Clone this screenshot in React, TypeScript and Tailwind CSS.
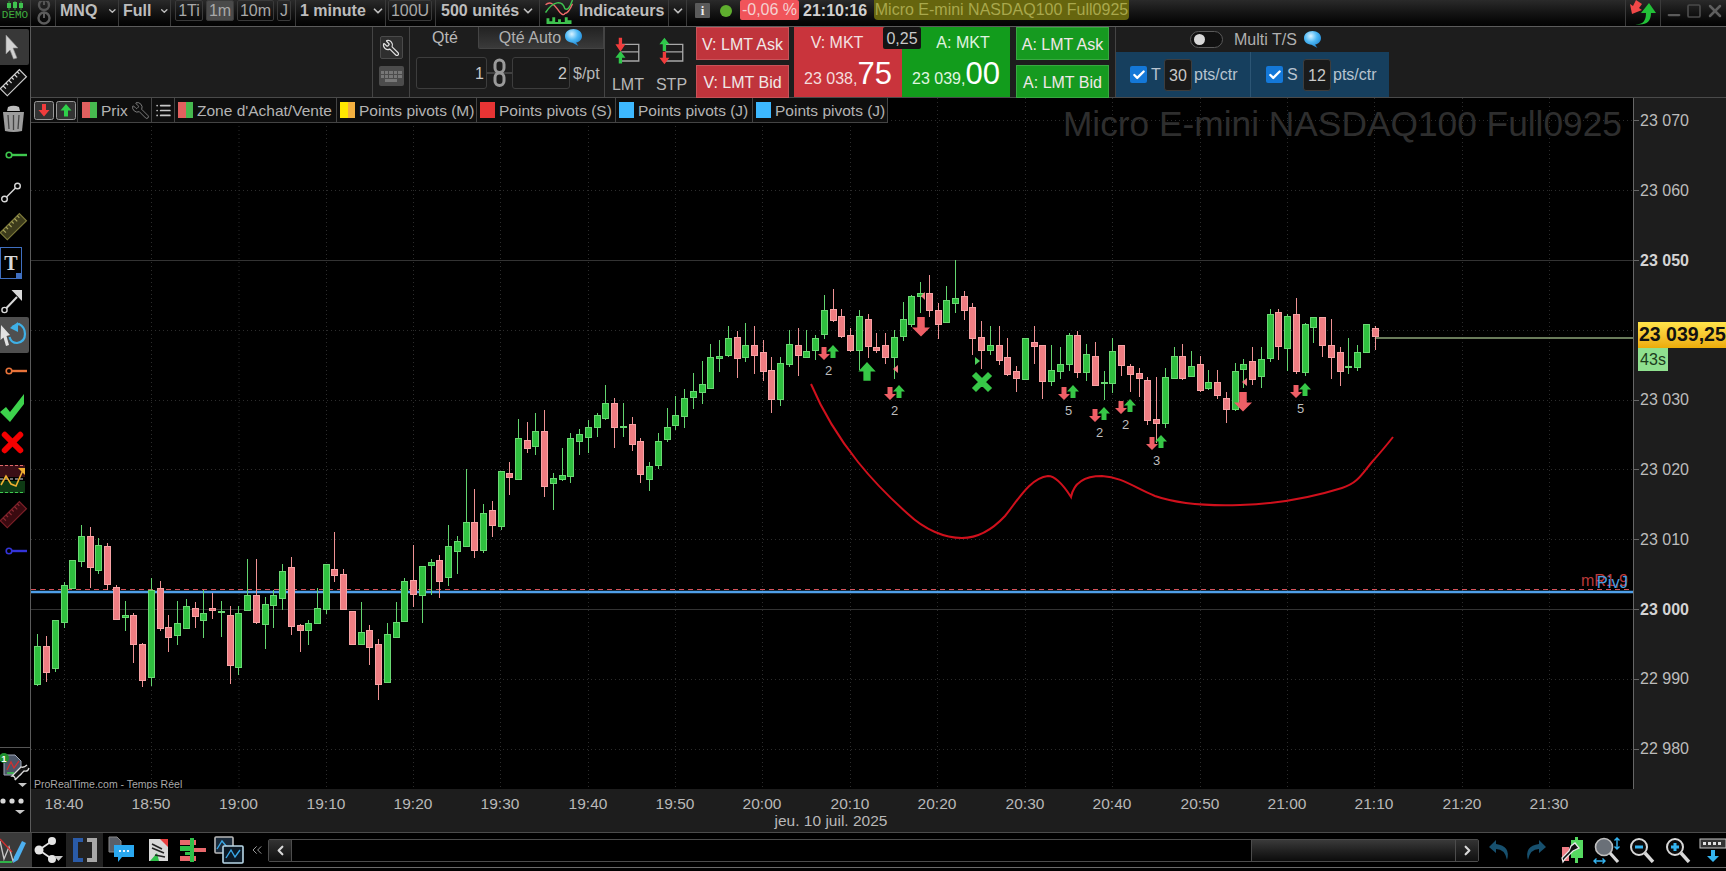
import { Check, ChevronDown, ChevronLeft, ChevronRight, ChevronsLeft, List, Minus, Square, Wrench, X } from "lucide-react";

// candles read off the chart: [green?, bodyTop, bodyBottom, wickTop, wickBottom], in thirds of a pixel from base
type Row = [number, number, number, number, number];
const chunks: [number, Row[]][] = [
  [400, [
    [1,738,852,702,858],[0,738,815,708,846],[1,660,803,660,815],[1,556,668,545,684],[1,480,565,480,568],
    [1,408,482,375,500],[0,408,500,381,565],[1,435,510,414,521],[0,438,552,430,570],[0,561,656,555,656],
    [1,646,651,603,692],[0,645,732,640,790],[0,732,839,730,860],[1,570,830,534,858],[0,564,684,543,692],
    [0,681,710,645,756],[1,670,705,603,735],[1,618,684,597,684],[0,624,648,606,684],[1,640,662,570,714],
    [0,624,630,579,657],[1,633,636,603,711],[0,645,795,618,852],[1,640,803,618,825],[1,586,630,477,630],
    [0,586,668,477,672],[1,613,672,591,747],[1,586,615,570,684],[1,513,594,492,630],[0,501,678,471,705],
    [0,675,690,672,756],[1,669,690,660,735],[1,624,669,564,672],[1,492,627,492,642],[0,507,525,396,546],
    [0,522,627,507,630],[0,633,732,633,732],[1,696,732,606,735],[0,690,741,675,795],[0,732,852,717,900],
    [1,702,846,669,846],[1,666,711,606,711],[1,543,662,534,662],[0,540,583,435,621],[1,498,584,498,669],
    [1,486,495,477,585],[0,480,543,465,594],[1,438,531,375,558],[1,423,453,408,522],[1,366,438,207,441],
  ]],
  [280, [
    [0,727,812,628,833],[1,700,812,672,818],[0,690,735,663,771],[1,573,738,573,750],[0,579,591,546,645],[1,474,597,417,597],
  ]],
  [310, [
    [0,390,414,336,429],[1,363,408,309,435],[0,363,528,300,561],[1,504,519,489,600],[1,495,507,414,513],
    [1,384,498,369,519],[1,372,393,357,435],[1,351,381,330,429],[1,315,351,309,381],[1,279,324,225,330],
    [0,279,351,264,414],[1,348,351,279,381],[0,342,402,321,423],[0,393,492,384,519],[1,468,507,456,543],
    [1,393,465,369,477],[1,351,387,294,396],[1,315,345,258,360],[1,264,318,237,354],[1,243,261,189,297],
    [1,222,246,153,282],[1,141,234,102,234],[1,138,144,90,186],[1,84,135,48,141],[0,81,144,63,204],
    [1,105,141,39,156],[0,105,135,48,192],[0,126,183,90,213],[0,180,267,141,309],[1,159,267,141,288],
    [1,102,162,60,171],[0,105,135,54,198],[1,123,141,60,144],
  ]],
  [280, [
    [1,174,210,165,240],[1,90,162,45,177],[0,87,120,27,126],[0,108,168,87,174],[0,165,210,144,216],
    [1,108,210,90,270],[0,117,198,102,234],
  ]],
  [310, [[0,111,120,69,129]]],
  [250, [
    [0,285,321,249,342],[1,261,321,240,387],[1,207,258,156,273],[1,138,222,135,231],[1,129,138,96,189],
    [0,129,180,75,201],[0,180,222,159,267],[1,150,216,108,216],[1,144,159,30,189],[0,138,180,123,210],
    [0,171,264,159,315],[0,261,300,213,357],[1,285,300,228,315],[0,285,330,228,345],[0,321,372,264,378],
    [0,363,384,348,426],[1,264,387,264,387],[0,276,288,228,342],[0,285,393,285,447],[1,360,393,285,408],
    [1,342,363,291,387],[1,255,342,249,363],[0,255,366,243,384],[1,312,366,282,393],[0,318,405,276,408],
    [1,396,399,363,450],[1,303,399,264,429],[0,285,345,285,378],[0,348,372,342,426],[0,370,384,354,441],
    [0,390,510,381,525],[0,507,519,381,580],[1,381,519,354,534],[1,318,384,291,384],[0,318,384,282,390],
    [1,348,378,303,378],[0,342,420,318,426],[1,396,414,360,420],[0,396,435,360,447],[0,444,477,426,519],
    [1,363,477,339,483],[1,342,357,327,414],[0,333,387,291,405],[1,327,378,291,414],[1,192,324,177,336],
    [0,186,288,177,330],[1,198,294,192,363],[0,192,363,144,372],[1,222,366,219,378],[1,201,231,201,279],
    [0,201,285,201,321],[0,285,321,207,387],[0,306,363,291,408],[1,348,351,264,372],[1,306,351,285,363],
    [1,222,306,222,306],[0,234,258,228,300],
  ]],
];

const candles = chunks.flatMap(([base, rows]) =>
  rows.map(([g, t, b, wt, wb]) => ({
    green: g === 1,
    top: base + t / 3,
    bottom: base + b / 3,
    wickTop: base + wt / 3,
    wickBottom: base + wb / 3,
  }))
);

const candleX = (i: number) => Math.round(37.3 + i * 8.74);
const priceY = (p: number) => 609.5 - (p - 23000) * 6.98;

const prices = [23070, 23060, 23050, 23040, 23030, 23020, 23010, 23000, 22990, 22980];
const times = [
  ["18:40", 64], ["18:50", 151], ["19:00", 238.5], ["19:10", 326], ["19:20", 413], ["19:30", 500],
  ["19:40", 588], ["19:50", 675], ["20:00", 762], ["20:10", 850], ["20:20", 937], ["20:30", 1025],
  ["20:40", 1112], ["20:50", 1200], ["21:00", 1287], ["21:10", 1374], ["21:20", 1462], ["21:30", 1549],
] as const;

const pairs = [
  { x: 824, y: 347, n: "2" },
  { x: 890, y: 387, n: "2" },
  { x: 1064, y: 387, n: "5" },
  { x: 1095, y: 409, n: "2" },
  { x: 1121, y: 401, n: "2" },
  { x: 1152, y: 437, n: "3" },
  { x: 1296, y: 385, n: "5" },
];

const drawing =
  "M811 384 C 822 410 838 437 858 462 C 874 482 890 498 908 514 C 925 530 945 538 962 538 C 978 538 992 530 1005 516 C 1018 500 1030 478 1048 476 C 1056 476 1064 486 1071 497 C 1074 482 1085 476 1102 476 C 1122 477 1135 488 1155 496 C 1178 504 1210 506 1240 505 C 1275 504 1310 498 1342 488 C 1358 483 1362 474 1372 462 C 1380 453 1386 446 1393 437";

function DownArrow({ x, y, big }: { x: number; y: number; big?: boolean }) {
  const s = big ? 1.5 : 1;
  return (
    <path
      transform={`translate(${x} ${y}) scale(${s})`}
      fill="#ee5f66"
      d="M-2.5 0 H2.5 V7 H6 L0 13 L-6 7 H-2.5 Z"
    />
  );
}

function UpArrow({ x, y, big }: { x: number; y: number; big?: boolean }) {
  const s = big ? 1.45 : 1;
  return (
    <path
      transform={`translate(${x} ${y}) scale(${s})`}
      fill="#37c747"
      d="M-2.5 13 H2.5 V6.5 H6 L0 0 L-6 6.5 H-2.5 Z"
    />
  );
}

function Chart() {
  return (
    <svg className="absolute inset-0 h-full w-full" viewBox="31 98 1602 691">
      {times.map(([t, x]) => (
        <line key={t} x1={x + 0.5} x2={x + 0.5} y1="98" y2="789" stroke="#2c2c2c" strokeDasharray="1 3" />
      ))}
      {prices.map((p) => {
        const y = Math.floor(priceY(p)) + 0.5;
        const solid = p === 23050 || p === 23000;
        return (
          <line
            key={p}
            x1="31"
            x2="1633"
            y1={y}
            y2={y}
            stroke={solid ? "#333" : "#2c2c2c"}
            strokeDasharray={solid ? undefined : "1 3"}
          />
        );
      })}
      <line x1="31" x2="1633" y1="592" y2="592" stroke="#4f9fe8" strokeWidth="2.4" />
      <line x1="31" x2="1633" y1="589.5" y2="589.5" stroke="#d5525a" strokeDasharray="5 4" />
      <text x="1628" y="586" textAnchor="end" fontSize="16" fill="#b93a3a">mR1,9</text>
      <text x="1628" y="588" textAnchor="end" fontSize="16.5" fill="#4a9fe0">PivJ</text>
      <line x1="1375" x2="1633" y1="338" y2="338" stroke="#8ea67a" strokeWidth="1.6" />
      {candles.map((c, i) => {
        const x = candleX(i);
        return (
          <g key={i} shapeRendering="crispEdges">
            <line
              x1={x + 0.5}
              x2={x + 0.5}
              y1={c.wickTop}
              y2={c.wickBottom}
              stroke={c.green ? "#63d56f" : "#ef9294"}
            />
            <rect
              x={x - 2.5}
              y={Math.round(c.top) + 0.5}
              width="6"
              height={Math.max(1, Math.round(c.bottom - c.top))}
              fill={c.green ? "#2fbf3f" : "#ee7d82"}
              stroke={c.green ? "#6ad873" : "#f7a3a5"}
            />
          </g>
        );
      })}
      <path d={drawing} fill="none" stroke="#d0101c" strokeWidth="2" />
      {pairs.map((m) => (
        <g key={m.x}>
          <DownArrow x={m.x} y={m.y} />
          <UpArrow x={m.x + 9} y={m.y - 2} />
          <text x={m.x + 4.5} y={m.y + 28} textAnchor="middle" fontSize="13" fill="#bdbdbd">{m.n}</text>
        </g>
      ))}
      <DownArrow x={921} y={317} big />
      <DownArrow x={1243} y={392} big />
      <UpArrow x={867} y={362} big />
      <path d="M925 292 L921 296 L925 300 Z M898 365 L893 369 L898 373 Z M1247 378 L1242 382 L1247 386 Z" fill="#ee7d82" />
      <path d="M975 357 L980 361 L975 365 Z" fill="#4fcf5c" />
      <path d="M976 374 L982 380 L988 374 L990 376 L984 382 L990 388 L988 390 L982 384 L976 390 L974 388 L980 382 L974 376 Z" fill="#37c747" stroke="#37c747" strokeWidth="3" />
    </svg>
  );
}

function Bubble() {
  return (
    <svg width="19" height="19" viewBox="0 0 19 19">
      <defs>
        <radialGradient id="bub" cx="0.4" cy="0.3" r="0.8">
          <stop offset="0" stopColor="#d8f2ff" />
          <stop offset="0.45" stopColor="#4db8f5" />
          <stop offset="1" stopColor="#1478c8" />
        </radialGradient>
      </defs>
      <path d="M9.5 1 C14.5 1 18 4 18 8 C18 12 14.5 14.5 12 14.6 L14.5 18 L8.5 14.7 C4 14.4 1 12 1 8 C1 4 4.5 1 9.5 1 Z" fill="url(#bub)" />
    </svg>
  );
}

function Swatch({ a, b }: { a: string; b: string }) {
  return (
    <span className="flex h-[16px] w-[15px] shrink-0">
      <span className="h-full w-1/2" style={{ background: a }} />
      <span className="h-full w-1/2" style={{ background: b }} />
    </span>
  );
}

function LegendItem({ a, b, label, w }: { a: string; b: string; label: string; w: number }) {
  return (
    <div className="flex h-full shrink-0 items-center gap-[4px] border-r border-[#444] pl-[3px]" style={{ width: w }}>
      <Swatch a={a} b={b} />
      <span className="whitespace-nowrap pt-[2px] text-[15.5px] text-[#b4b4b4]">{label}</span>
    </div>
  );
}

function Legend() {
  return (
    <div className="absolute left-0 top-0 flex h-[25px] border-b border-[#444] bg-[#0e0e0e]">
      <div className="flex h-full w-[47px] items-center gap-[2px] border-r border-[#444] pl-[3px]">
        <svg width="20" height="19" viewBox="0 0 20 19">
          <rect x="0.5" y="0.5" width="19" height="18" rx="2" fill="#333" stroke="#999" />
          <path d="M8 3 H12 V9 H15.5 L10 15.5 L4.5 9 H8 Z" fill="#f03c3c" />
        </svg>
        <svg width="20" height="19" viewBox="0 0 20 19">
          <rect x="0.5" y="0.5" width="19" height="18" rx="2" fill="#333" stroke="#999" />
          <path d="M8 15.5 H12 V9.5 H15.5 L10 3 L4.5 9.5 H8 Z" fill="#2fd04a" />
        </svg>
      </div>
      <div className="flex h-full w-[74px] items-center gap-[4px] border-r border-[#444] pl-[4px]">
        <Swatch a="#e2605f" b="#46b94f" />
        <span className="pt-[2px] text-[15.5px] text-[#b4b4b4]">Prix</span>
        <Wrench size={19} strokeWidth={1.1} className="-ml-[1px] -scale-x-100 text-[#8a8a8a]" />
      </div>
      <div className="flex h-full w-[23px] items-center justify-center border-r border-[#444]">
        <List size={17} strokeWidth={2.4} className="text-[#c8c8c8]" />
      </div>
      <LegendItem a="#e2605f" b="#46b94f" label="Zone d'Achat/Vente" w={162} />
      <LegendItem a="#ffe600" b="#f4b040" label="Points pivots (M)" w={140} />
      <LegendItem a="#e83434" b="#e83434" label="Points pivots (S)" w={139} />
      <LegendItem a="#3db8ff" b="#3db8ff" label="Points pivots (J)" w={137} />
      <LegendItem a="#3db8ff" b="#3db8ff" label="Points pivots (J)" w={135} />
    </div>
  );
}

function Ruler({ color, fill, tick }: { color: string; fill: string; tick: string }) {
  return (
    <svg width="31" height="36" viewBox="0 0 31 36">
      <g transform="rotate(-45 13 18)">
        <rect x="0" y="13" width="27" height="10" fill={fill} stroke={color} strokeWidth="1.2" />
        <path d="M4 13v4M8 13v3M12 13v4M16 13v3M20 13v4M24 13v3" stroke={tick} strokeWidth="1.2" />
      </g>
    </svg>
  );
}

function HandleLine({ color }: { color: string }) {
  return (
    <svg width="31" height="36" viewBox="0 0 31 36">
      <circle cx="9" cy="18" r="2.8" fill="none" stroke={color} strokeWidth="1.6" />
      <path d="M12 18 H27" stroke={color} strokeWidth="2.4" />
    </svg>
  );
}

function Sidebar() {
  return (
    <div className="flex w-[31px] shrink-0 flex-col border-r border-[#5a5a5a] bg-black pt-[2px]">
      <div className="h-9 w-[29px] rounded-r-[2px] bg-[#383838]">
        <svg width="29" height="36" viewBox="0 0 29 36">
          <path d="M6 6 L18 19 L13 19 L17 29 L13.5 30 L10 21 L6 25 Z" fill="#d2d2d2" stroke="#8a8a8a" strokeWidth="0.6" />
        </svg>
      </div>
      <div className="h-9"><Ruler color="#cfcfcf" fill="#111" tick="#dcdcdc" /></div>
      <div className="h-9">
        <svg width="31" height="36" viewBox="0 0 31 36">
          <path d="M7 10 H20 L19 6 Q13.5 3.5 8 6 Z" fill="#bdbdbd" />
          <path d="M3 11 H24 L22 30 Q13.5 32 5 30 Z" fill="#9c9c9c" />
          <path d="M8 14 L9 28 M13.5 14 V29 M19 14 L18 28" stroke="#444" strokeWidth="1.3" />
        </svg>
      </div>
      <div className="h-9"><HandleLine color="#3ec84e" /></div>
      <div className="h-9">
        <svg width="31" height="36" viewBox="0 0 31 36">
          <circle cx="4.5" cy="26" r="2.8" fill="none" stroke="#d8d8d8" strokeWidth="1.4" />
          <circle cx="17.5" cy="13" r="2.8" fill="none" stroke="#d8d8d8" strokeWidth="1.4" />
          <path d="M6.5 24 L15.5 15" stroke="#d8d8d8" strokeWidth="1.4" />
        </svg>
      </div>
      <div className="h-9"><Ruler color="#7d7a3a" fill="#3c3b1c" tick="#a7a35a" /></div>
      <div className="flex h-9 items-center">
        <div className="relative flex h-[32px] w-[22px] items-center justify-center border border-[#3f6fc0] [font-family:'Liberation_Serif',serif] text-[20px] font-bold leading-none text-[#d8d8d8]">
          T
          <span className="absolute bottom-0 right-0 h-[5px] w-[5px] bg-[#3f6fc0]" />
        </div>
      </div>
      <div className="h-9">
        <svg width="31" height="36" viewBox="0 0 31 36">
          <circle cx="4.5" cy="29" r="2.6" fill="none" stroke="#d8d8d8" strokeWidth="1.4" />
          <path d="M6.5 27 L17 16" stroke="#d8d8d8" strokeWidth="2" />
          <path d="M11.5 9 H22 V20 Z" fill="#d8d8d8" />
        </svg>
      </div>
      <div className="h-9 w-[29px] rounded-r-[2px] bg-[#4f4f4f]">
        <svg width="29" height="36" viewBox="0 0 29 36">
          <path d="M1 8 L10 18 L6.5 19 L9 28 L6 29 L3.5 20.5 L0.5 23 Z" fill="#e2e2e2" />
          <path d="M12 10 L19 7 Q25 10 25 17 Q25 25 17 26 Q11 26 9.5 20" fill="none" stroke="#3fb0e6" strokeWidth="2.2" />
          <path d="M10 11 L18 5 V15 Z" fill="#3fb0e6" />
        </svg>
      </div>
      <div className="h-9"><HandleLine color="#e8733a" /></div>
      <div className="h-9">
        <svg width="31" height="36" viewBox="0 0 31 36">
          <path d="M0 23 L6 18 L10 23 L24 5 V15 L10 33 Z" fill="#3dd24c" />
        </svg>
      </div>
      <div className="h-9">
        <X size={31} strokeWidth={4.6} className="-ml-[3px] mt-[2px] text-[#f40000]" />
      </div>
      <div className="h-9">
        <svg width="31" height="36" viewBox="0 0 31 36">
          <rect x="0" y="4" width="25" height="12" fill="#3a0f16" />
          <rect x="0" y="20" width="25" height="12" fill="#0e3a14" />
          <path d="M0 4.5 H25" stroke="#e06a6a" strokeDasharray="3 2" />
          <path d="M0 18 H25" stroke="#dcdcdc" strokeDasharray="3 2" />
          <path d="M0 31.5 H25" stroke="#3fc84f" strokeDasharray="3 2" />
          <path d="M1 24 L6 15 L11 23 L16 25 L23 9" fill="none" stroke="#f0b030" strokeWidth="1.6" />
          <path d="M18 7 H25 V14 Z" fill="#f0b030" />
        </svg>
      </div>
      <div className="h-9"><Ruler color="#7c2028" fill="#3a0a10" tick="#8c2a32" /></div>
      <div className="h-9"><HandleLine color="#3434d8" /></div>
      <div className="mt-auto h-[85px] border-t border-[#555] pt-[4px]">
        <svg width="31" height="36" viewBox="0 0 31 36">
          <path d="M4 3 H15 L21 9 V23 H4 Z" fill="#4c5668" stroke="#a0a8b8" />
          <path d="M7 18 L11 10 L14 16 L19 9" fill="none" stroke="#d03030" strokeWidth="1.3" />
          <path d="M7 21 H14" stroke="#3cc84c" strokeWidth="1.5" />
          <circle cx="4" cy="6" r="5" fill="#1f8f2e" />
          <text x="4" y="9.5" textAnchor="middle" fontSize="9.5" fontWeight="700" fill="#fff">1</text>
          <path d="M27 13 Q24 16 21 15 L12 24 A3 3 0 0 1 15 28 L24 19 Q28 20 29 16" fill="#111" stroke="#dadada" strokeWidth="1.3" />
          <path d="M18 31 H27 L22.5 35 Z" fill="#c8c8c8" />
        </svg>
        <svg width="31" height="32" viewBox="0 0 31 32">
          <circle cx="3" cy="13" r="2.6" fill="#d8d8d8" />
          <circle cx="12" cy="13" r="2.6" fill="#d8d8d8" />
          <circle cx="21" cy="13" r="2.6" fill="#d8d8d8" />
          <path d="M15 22 H25 L20 26 Z" fill="#c8c8c8" />
        </svg>
      </div>
    </div>
  );
}

function TopBar() {
  const cell = "flex h-full shrink-0 items-center border-r border-[#3a3a3a] pb-[5px]";
  const dd = "text-[16px] font-bold text-[#bdbdbd] whitespace-nowrap";
  const tab = "flex h-[21px] items-center justify-center rounded-[2px] border border-[#3a3a3a] text-[16px] text-[#a8a8a8]";
  return (
    <div className="flex h-[27px] shrink-0 overflow-hidden border-b border-[#5c5c5c] bg-linear-to-b from-[#2a2a2a] to-[#030303]">
      <div className="flex h-full w-[31px] shrink-0 flex-col items-center border-r border-[#3a3a3a] pt-[1px] leading-none">
        <svg width="26" height="9" viewBox="0 0 26 9">
          <path d="M7 0V9M13 0V9M19 0V9" stroke="#3a9a3a" />
          <rect x="5" y="2" width="4" height="5" fill="#3fc24f" />
          <rect x="11" y="1" width="4" height="6" fill="#3fc24f" />
          <rect x="17" y="2" width="4" height="5" fill="#3fc24f" />
        </svg>
        <span className="[font-family:'Liberation_Mono',monospace] text-[11px] leading-[11px] text-[#3fae3f]">DEMO</span>
      </div>
      <div className="flex h-full w-[25px] shrink-0 items-center border-r border-[#3a3a3a] pl-[6px]">
        <svg width="14" height="24" viewBox="0 0 14 24">
          <circle cx="7" cy="4" r="5" fill="none" stroke="#555" strokeWidth="2.4" />
          <path d="M7 0V4" stroke="#555" strokeWidth="2" />
          <circle cx="7" cy="17" r="5.5" fill="none" stroke="#5c5c5c" strokeWidth="2.4" />
          <path d="M7 12V17" stroke="#5c5c5c" strokeWidth="2" />
        </svg>
      </div>
      <div className={`${cell} w-[63px] pl-[4px]`}>
        <span className={dd}>MNQ</span>
        <ChevronDown size={14} strokeWidth={3} className="ml-[10px] text-[#bdbdbd]" />
      </div>
      <div className={`${cell} w-[52px] pl-[4px]`}>
        <span className={dd}>Full</span>
        <ChevronDown size={14} strokeWidth={3} className="ml-[8px] text-[#bdbdbd]" />
      </div>
      <div className={`${cell} w-[125px] gap-[3px] pl-[4px]`}>
        <div className={`${tab} w-[28px]`}>1Ti</div>
        <div className={`${tab} w-[28px] bg-[#4a4a4a]`}>1m</div>
        <div className={`${tab} w-[37px]`}>10m</div>
        <div className={`${tab} w-[14px]`}>J</div>
      </div>
      <div className={`${cell} w-[90px] pl-[4px]`}>
        <span className={dd}>1 minute</span>
        <ChevronDown size={14} strokeWidth={3} className="ml-[5px] text-[#bdbdbd]" />
      </div>
      <div className={`${cell} w-[50px] pl-[2px]`}>
        <div className={`${tab} w-[44px]`}>100U</div>
      </div>
      <div className={`${cell} w-[104px] pl-[5px]`}>
        <span className={dd}>500 unités</span>
        <ChevronDown size={14} strokeWidth={3} className="ml-[2px] text-[#bdbdbd]" />
      </div>
      <div className={`${cell} w-[129px] gap-[5px] pl-[5px]`}>
        <svg width="29" height="25" viewBox="0 0 29 26" className="mt-[4px]">
          <path d="M0 5 Q6 0 12 9 T20 14 Q24 14 28 4" fill="none" stroke="#ee6a6a" strokeWidth="1.5" />
          <path d="M0 13 Q6 4 12 3 T20 9 Q24 12 28 0" fill="none" stroke="#3fc24f" strokeWidth="1.5" />
          <path d="M1 25V19H4V22H7V18H10V23H13V20H16V23H20V18H23V21H27V25Z" fill="#3fc24f" />
        </svg>
        <span className={dd}>Indicateurs</span>
      </div>
      <div className={`${cell} w-[18px] justify-center`}>
        <ChevronDown size={14} strokeWidth={3} className="text-[#bdbdbd]" />
      </div>
      <div className="mb-[5px] ml-[8px] flex h-[15px] w-[15px] shrink-0 items-center justify-center self-center rounded-[1px] bg-[#5a5a5a] [font-family:'Liberation_Serif',serif] text-[13px] font-bold leading-none text-[#eee]">
        i
      </div>
      <div className="mb-[5px] ml-[10px] h-[12px] w-[12px] shrink-0 self-center rounded-full bg-[#5fae2e]" />
      <div className="ml-[8px] flex h-[20px] w-[59px] shrink-0 items-center justify-center rounded-[2px] bg-[#f0545a] text-[16px] text-[#f4d0d0]">
        -0,06 %
      </div>
      <div className="ml-[4px] w-[66px] shrink-0 self-center pb-[5px] text-[16px] font-bold text-[#d0d0d0]">21:10:16</div>
      <div className="ml-[5px] flex h-[20px] w-[255px] shrink-0 items-center justify-center rounded-b-[4px] bg-[#66650e] text-[16px] whitespace-nowrap text-[#a9a84c]">
        Micro E-mini NASDAQ100 Full0925
      </div>
      <div className="ml-auto flex h-full w-[36px] shrink-0 items-center justify-center border-x border-[#3a3a3a]">
        <svg width="30" height="26" viewBox="0 0 30 26">
          <path d="M8 0 L14 4 L11 8 L14 10 L4 14 L2 4 L5 6 Z" fill="#f04848" />
          <path d="M6 24 Q18 26 18 13 H13 L21 3 L28 13 H23 Q23 27 6 24 Z" fill="#22c038" />
        </svg>
      </div>
      <div className="flex w-[65px] shrink-0 items-center pb-[5px] pl-[4px]">
        <Minus size={18} strokeWidth={3} className="mt-[8px] text-[#5a5a5a]" />
        <Square size={16} strokeWidth={2.6} className="ml-[3px] text-[#4a4a4a]" />
        <X size={20} strokeWidth={3} className="ml-[3px] text-[#5f5f5f]" />
      </div>
    </div>
  );
}

function Field({ value, w, align }: { value: string; w: number; align?: string }) {
  return (
    <div
      className={`flex h-[32px] shrink-0 items-center rounded-[3px] border border-[#3d3d3d] bg-[#1a1a1a] pt-[2px] text-[16px] text-[#c8c8c8] ${align ?? "justify-end pr-[2px]"}`}
      style={{ width: w }}
    >
      {value}
    </div>
  );
}

function OrderStack({ a, b, tone }: { a: string; b: string; tone: string }) {
  const c = `flex h-[33px] w-[93px] items-center justify-center border border-white/15 pt-[2px] text-[16px] text-[#f0e8e8] ${tone}`;
  return (
    <div className="flex shrink-0 flex-col gap-[5px]">
      <div className={c}>{a}</div>
      <div className={c}>{b}</div>
    </div>
  );
}

function OrderBar() {
  return (
    <div className="flex h-[71px] shrink-0 border-b border-[#4a4a4a] bg-[#1d1d1d]">
      <div className="w-[342px] shrink-0 border-r border-[#444]" />
      <div className="flex w-[37px] shrink-0 flex-col items-center gap-[7px] border-r border-[#444] pt-[9px]">
        <div className="flex h-[23px] w-[23px] items-center justify-center rounded-[2px] border border-[#4a4a4a] bg-[#2e2e2e]">
          <Wrench size={18} strokeWidth={1.6} className="-scale-x-100 text-[#e0e0e0]" />
        </div>
        <div className="grid h-[20px] w-[25px] grid-cols-5 content-center gap-[1px] rounded-[2px] bg-[#4c4c4c] px-[2px]">
          {Array.from({ length: 10 }, (_, i) => (
            <span key={i} className="h-[3px] bg-[#777]" />
          ))}
          <span className="col-span-3 col-start-2 h-[3px] bg-[#777]" />
        </div>
      </div>
      <div className="flex w-[195px] shrink-0 flex-col border-r border-[#444]">
        <div className="flex h-[22px] shrink-0">
          <div className="flex w-[68px] items-center justify-center pl-[2px] text-[16px] text-[#b8b8b8]">Qté</div>
          <div className="flex flex-1 items-center justify-center gap-[3px] rounded-bl-[2px] border border-t-0 border-[#444] bg-linear-to-b from-[#222] to-[#3a3a3a] text-[16px] text-[#b0b0b0]">
            Qté Auto
            <Bubble />
          </div>
        </div>
        <div className="mt-[8px] flex items-center pl-[6px]">
          <Field value="1" w={71} />
          <svg width="25" height="32" viewBox="0 0 25 32" className="shrink-0">
            <path d="M0 16 H25" stroke="#666" />
            <rect x="8" y="3" width="9" height="12.5" rx="4.5" fill="#1d1d1d" stroke="#9a9a9a" strokeWidth="3" />
            <rect x="8" y="16" width="9" height="12.5" rx="4.5" fill="#1d1d1d" stroke="#9a9a9a" strokeWidth="3" />
          </svg>
          <Field value="2" w={58} />
          <span className="ml-[3px] whitespace-nowrap pt-[2px] text-[16px] text-[#b8b8b8]">$/pt</span>
        </div>
      </div>
      <div className="flex w-[89px] shrink-0 flex-col items-center pt-[9px]">
        <div className="flex gap-[13px]">
          <svg width="31" height="30" viewBox="0 0 31 36">
            <path d="M8 10 H29 V19 H8 M29 19 V30 H8" fill="none" stroke="#a8a8a8" strokeWidth="1.6" />
            <path d="M5 2 H9 V10 H13 L7 19 L1 10 H5 Z" fill="#f03c3c" />
            <path d="M5 33 H9 V26 H13 L7 18 L1 26 H5 Z" fill="#2fc84a" />
          </svg>
          <svg width="31" height="30" viewBox="0 0 31 36">
            <path d="M8 10 H29 V19 H8 M29 19 V30 H8" fill="none" stroke="#a8a8a8" strokeWidth="1.6" />
            <path d="M5 18 H9 V10 H13 L7 2 L1 10 H5 Z" fill="#2fc84a" />
            <path d="M5 19 H9 V26 H13 L7 34 L1 26 H5 Z" fill="#f03c3c" />
          </svg>
        </div>
        <div className="mt-[9px] flex gap-[12px] text-[16px] leading-[20px] text-[#b8b8b8]">
          <span>LMT</span>
          <span>STP</span>
        </div>
      </div>
      <div className="ml-[2px]">
        <OrderStack a="V: LMT Ask" b="V: LMT Bid" tone="bg-[#c0343c]" />
      </div>
      <div className="relative ml-[5px] flex w-[216px] shrink-0">
        <div className="flex w-1/2 flex-col items-center bg-[#c9343c]">
          <span className="mt-[5px] mr-[22px] text-[16px] leading-[22px] text-[#f4e0e0]">V: MKT</span>
          <span className="mt-[2px] flex items-baseline whitespace-nowrap text-[16px] text-[#f4dcdc]">
            23 038,<span className="text-[31px] leading-[36px] text-white">75</span>
          </span>
        </div>
        <div className="flex w-1/2 flex-col items-center bg-[#129c1c]">
          <span className="mt-[5px] ml-[14px] text-[16px] leading-[22px] text-[#e0f4e0]">A: MKT</span>
          <span className="mt-[2px] flex items-baseline whitespace-nowrap text-[16px] text-[#e0f6e0]">
            23 039,<span className="text-[31px] leading-[36px] text-white">00</span>
          </span>
        </div>
        <div className="absolute left-[89px] top-0 flex h-[22px] w-[38px] items-center justify-center rounded-[2px] bg-[#141414] pt-[2px] text-[16px] text-[#c8c8c8]">
          0,25
        </div>
      </div>
      <div className="ml-[6px]">
        <OrderStack a="A: LMT Ask" b="A: LMT Bid" tone="bg-[#169a20]" />
      </div>
      <div className="ml-[6px] flex w-[274px] shrink-0 flex-col border-l border-[#444]">
        <div className="flex h-[25px] shrink-0 items-center pl-[74px]">
          <div className="flex h-[17px] w-[33px] items-center rounded-full border border-[#5a5a5a] bg-[#111] pl-[3px]">
            <span className="h-[11px] w-[11px] rounded-full bg-[#d8d8d8]" />
          </div>
          <span className="ml-[11px] text-[16px] text-[#b0b0b0]">Multi T/S</span>
          <span className="ml-[6px]"><Bubble /></span>
        </div>
        <div className="flex flex-1 bg-[#163f5e]">
          <div className="flex w-[135px] shrink-0 items-center border-r border-[#2c5574] pl-[14px]">
            <span className="flex h-[17px] w-[17px] items-center justify-center rounded-[2px] bg-[#1478d8]">
              <Check size={14} strokeWidth={4} className="text-white" />
            </span>
            <span className="ml-[4px] w-[13px] pt-[1px] text-[16px] text-[#b8c4d0]">T</span>
            <Field value="30" w={28} align="justify-center" />
            <span className="ml-[2px] pt-[1px] text-[16px] text-[#b8c4d0]">pts/ctr</span>
          </div>
          <div className="flex flex-1 items-center pl-[15px]">
            <span className="flex h-[17px] w-[17px] items-center justify-center rounded-[2px] bg-[#1478d8]">
              <Check size={14} strokeWidth={4} className="text-white" />
            </span>
            <span className="ml-[4px] w-[16px] pt-[1px] text-[16px] text-[#b8c4d0]">S</span>
            <Field value="12" w={28} align="justify-center" />
            <span className="ml-[2px] pt-[1px] text-[16px] text-[#b8c4d0]">pts/ctr</span>
          </div>
        </div>
      </div>
    </div>
  );
}

function PriceAxis() {
  return (
    <div className="relative w-[93px] shrink-0 border-l border-[#666] bg-[#1d1d1d]">
      {prices.filter((p) => p !== 23040).map((p) => {
        const y = priceY(p) - 98;
        const major = p === 23050 || p === 23000;
        return (
          <div key={p} className="absolute left-0 flex items-center" style={{ top: y - 10 }}>
            <span className="h-px w-[5px] bg-[#666]" />
            <span className={`ml-[1px] text-[16px] leading-[20px] ${major ? "font-bold text-[#d4d4d4]" : "text-[#bcbcbc]"}`}>
              {String(p).slice(0, 2)} {String(p).slice(2)}
            </span>
          </div>
        );
      })}
      <div className="absolute left-[4px] right-0 top-[224px] flex h-[26px] items-center overflow-hidden bg-linear-to-b from-[#ffe44a] to-[#ecab06] pl-[1px] text-[19.5px] font-bold whitespace-nowrap text-[#111]">
        23 039,25
      </div>
      <div className="absolute left-[4px] top-[250px] flex h-[23px] w-[30px] items-center justify-center bg-[#8fe08f] text-[16px] text-[#1c3c1c]">
        43s
      </div>
    </div>
  );
}

function TimeAxis() {
  return (
    <div className="relative h-[43px] shrink-0 bg-[#1d1d1d]">
      {times.map(([t, x]) => (
        <span key={t} className="absolute top-[5px] -translate-x-1/2 text-[15.5px] leading-[20px] text-[#b8b8b8]" style={{ left: x - 31 }}>
          {t}
        </span>
      ))}
      <span className="absolute left-[800px] top-[23px] -translate-x-1/2 whitespace-nowrap text-[15.5px] leading-[18px] text-[#b8b8b8]">
        jeu. 10 juil. 2025
      </span>
    </div>
  );
}

function BottomBar() {
  return (
    <div className="flex h-[36px] shrink-0 items-center border-t border-[#4c4c4c] border-b-[1px] border-b-[#6a6a6a] bg-black">
      <div className="h-full w-[32px] shrink-0 bg-[#3a3a3a]">
        <svg width="32" height="34" viewBox="0 0 32 34">
          <path d="M0 8 L4 26 L9 14 L13 28 L18 19" fill="none" stroke="#c8c8c8" strokeWidth="1.3" />
          <path d="M0 6 L12 19" stroke="#d03030" strokeWidth="1.4" />
          <path d="M0 29 H12" stroke="#2fc04a" strokeWidth="1.8" />
          <path d="M22 8 L26 10 L18 27 L13 30 L14 24 Z" fill="#4db0f0" />
        </svg>
      </div>
      <div className="flex w-[34px] shrink-0 justify-center">
        <svg width="30" height="28" viewBox="0 0 30 28">
          <circle cx="5" cy="14" r="4.5" fill="#e4e4e4" />
          <circle cx="18" cy="5" r="4" fill="#e4e4e4" />
          <circle cx="18" cy="23" r="4" fill="#e4e4e4" />
          <path d="M5 14 L18 5 M5 14 L18 23" stroke="#e4e4e4" strokeWidth="1.8" />
          <path d="M20 20 H29 L24.5 25 Z" fill="#c8c8c8" />
        </svg>
      </div>
      <div className="flex h-full w-[37px] shrink-0 items-center justify-center bg-[#222]">
        <svg width="28" height="26" viewBox="0 0 28 26">
          <path d="M12 1 H2 V25 H12 V21 H7 V5 H12 Z" fill="#2a5ba8" />
          <path d="M16 1 H26 V25 H16 V21 H21 V5 H16 Z" fill="#a8a8a8" />
        </svg>
      </div>
      <div className="ml-[5px] w-[27px] shrink-0">
        <svg width="27" height="28" viewBox="0 0 27 28">
          <path d="M1 1 H9 L13 5 V16 H1 Z" fill="#5a5f68" stroke="#888" />
          <path d="M6 9 H26 V21 H14 L10 26 V21 H6 Z" fill="#2aa8f0" />
          <path d="M11 15h2M15 15h2M19 15h2" stroke="#e8f4ff" strokeWidth="1.8" />
        </svg>
      </div>
      <div className="ml-[14px] w-[20px] shrink-0">
        <svg width="20" height="24" viewBox="0 0 20 24">
          <path d="M0 1 H19 V23 H0 Z" fill="#d8d8d8" />
          <path d="M11 1 H19 V9 Z" fill="#e84040" />
          <path d="M1 23 L8 15 L10 23 Z" fill="#2fc04a" />
          <path d="M3 6 L13 11 M3 10 L15 15 M6 17 L16 19" stroke="#222" strokeWidth="1.6" />
        </svg>
      </div>
      <div className="ml-[11px] w-[26px] shrink-0">
        <svg width="26" height="24" viewBox="0 0 26 24">
          <path d="M0 2 H16 V7 H0 Z M12 10 H26 V14 H12 Z M0 18 H16 V23 H0 Z" fill="#e8686c" />
          <path d="M10 0 H14 V24 H10 Z M0 8 H12 V13 H0 Z M5 14 H12 V17 H5 Z" fill="#2fc04a" />
        </svg>
      </div>
      <div className="ml-[8px] w-[30px] shrink-0">
        <svg width="30" height="28" viewBox="0 0 30 28">
          <rect x="1" y="1" width="18" height="16" rx="1" fill="#1a2a3a" stroke="#b8b8b8" strokeWidth="1.6" />
          <path d="M3 13 L8 5 L13 11" fill="none" stroke="#3aa8e8" strokeWidth="1.4" />
          <rect x="9" y="10" width="20" height="17" rx="1" fill="#0c1a26" stroke="#b8d8e8" strokeWidth="1.6" />
          <path d="M12 22 L17 14 L21 21 L26 14" fill="none" stroke="#3aa8e8" strokeWidth="1.4" />
        </svg>
      </div>
      <ChevronsLeft size={16} strokeWidth={1.2} className="ml-[5px] shrink-0 text-[#c0c0c0]" />
      <div className="ml-[3px] flex h-[23px] w-[1211px] shrink-0 rounded-[2px] border border-[#4c4c4c]">
        <div className="flex w-[23px] shrink-0 items-center justify-center border-r border-[#4c4c4c] bg-linear-to-b from-[#333] to-[#111]">
          <ChevronLeft size={15} strokeWidth={3.4} className="text-[#d8d8d8]" />
        </div>
        <div className="flex-1 bg-black" />
        <div className="w-[204px] shrink-0 border-l border-[#4c4c4c] bg-linear-to-b from-[#3a3a3a] to-[#0c0c0c]" />
        <div className="flex w-[23px] shrink-0 items-center justify-center border-l border-[#4c4c4c] bg-linear-to-b from-[#333] to-[#111]">
          <ChevronRight size={15} strokeWidth={3.4} className="text-[#d8d8d8]" />
        </div>
      </div>
      <div className="ml-[10px] flex shrink-0 items-center gap-[13px]">
        <svg width="22" height="24" viewBox="0 0 22 24">
          <path d="M7 2 L0 9 L7 15 V11 Q16 11 18 22 Q22 8 7 6 Z" fill="#17506e" />
        </svg>
        <svg width="22" height="24" viewBox="0 0 22 24">
          <path d="M15 2 L22 9 L15 15 V11 Q6 11 4 22 Q0 8 15 6 Z" fill="#17506e" />
        </svg>
      </div>
      <div className="ml-[13px] w-[26px] shrink-0">
        <svg width="26" height="28" viewBox="0 0 26 28">
          <path d="M16 1 H19 V4 H24 V22 H19 V27 H16 V22 H12 V4 H16 Z" fill="#55d960" />
          <path d="M3 11 H10 V25 H3 Z" fill="#ef7d86" />
          <path d="M16 7 L20 12 L14 15 L6 23 L4 26 L3 22 L10 15 L12 10 Z" fill="#111" stroke="#e8e8e8" strokeWidth="1.3" />
        </svg>
      </div>
      <div className="ml-[8px] w-[28px] shrink-0">
        <svg width="28" height="28" viewBox="0 0 28 28">
          <circle cx="11" cy="11" r="8.5" fill="#6a7078" stroke="#c0c0c0" strokeWidth="1.6" />
          <path d="M17 17 L25 26" stroke="#d8d8d8" strokeWidth="3.2" />
          <path d="M24 2V13M21.5 4.5L24 2L26.5 4.5M21.5 10.5L24 13L26.5 10.5" fill="none" stroke="#34b4f0" strokeWidth="1.4" />
          <path d="M1 25H12M3.5 22.5L1 25L3.5 27.5M9.5 22.5L12 25L9.5 27.5" fill="none" stroke="#34b4f0" strokeWidth="1.4" />
        </svg>
      </div>
      <div className="ml-[8px] w-[26px] shrink-0">
        <svg width="26" height="26" viewBox="0 0 26 26">
          <circle cx="10" cy="10" r="8" fill="#0a0a0a" stroke="#d8d8d8" strokeWidth="2" />
          <path d="M6 10 H14" stroke="#34b4f0" strokeWidth="3" />
          <path d="M16 16 L24 25" stroke="#d8d8d8" strokeWidth="3.4" />
        </svg>
      </div>
      <div className="ml-[10px] w-[26px] shrink-0">
        <svg width="26" height="26" viewBox="0 0 26 26">
          <circle cx="10" cy="10" r="8" fill="#0a0a0a" stroke="#d8d8d8" strokeWidth="2" />
          <path d="M6 10 H14 M10 6 V14" stroke="#34b4f0" strokeWidth="3" />
          <path d="M16 16 L24 25" stroke="#d8d8d8" strokeWidth="3.4" />
        </svg>
      </div>
      <div className="ml-[8px] w-[28px] shrink-0">
        <svg width="28" height="26" viewBox="0 0 28 26">
          <rect x="1" y="2" width="26" height="9" fill="#333" stroke="#c8c8c8" />
          <path d="M4 5h3v3H4zM9 5h3v3H9zM14 5h3v3h-3zM19 5h3v3h-3z" fill="#e0e0e0" />
          <path d="M12 13 H16 V19 H20 L14 25 L8 19 H12 Z" fill="#34b4f0" />
        </svg>
      </div>
    </div>
  );
}

export default function App() {
  return (
    <div className="flex h-[871px] w-[1726px] flex-col overflow-hidden bg-black [font-family:'Liberation_Sans',Arial,sans-serif]">
      <TopBar />
      <div className="flex min-h-0 flex-1">
        <Sidebar />
        <div className="flex min-w-0 flex-1 flex-col">
          <OrderBar />
          <div className="flex min-h-0 flex-1">
            <div className="relative flex-1 bg-black">
              <Chart />
              <div className="absolute right-[11px] top-[8px] text-[35.3px] leading-none whitespace-nowrap text-[#2e2e2e]">
                Micro E-mini NASDAQ100 Full0925
              </div>
              <Legend />
              <div className="absolute -bottom-px left-[3px] text-[10.5px] leading-[12px] text-[#a8a8a8]">
                ProRealTime.com - Temps Réel
              </div>
            </div>
            <PriceAxis />
          </div>
          <TimeAxis />
        </div>
      </div>
      <BottomBar />
      <div className="h-[3px] shrink-0 bg-black" />
    </div>
  );
}
